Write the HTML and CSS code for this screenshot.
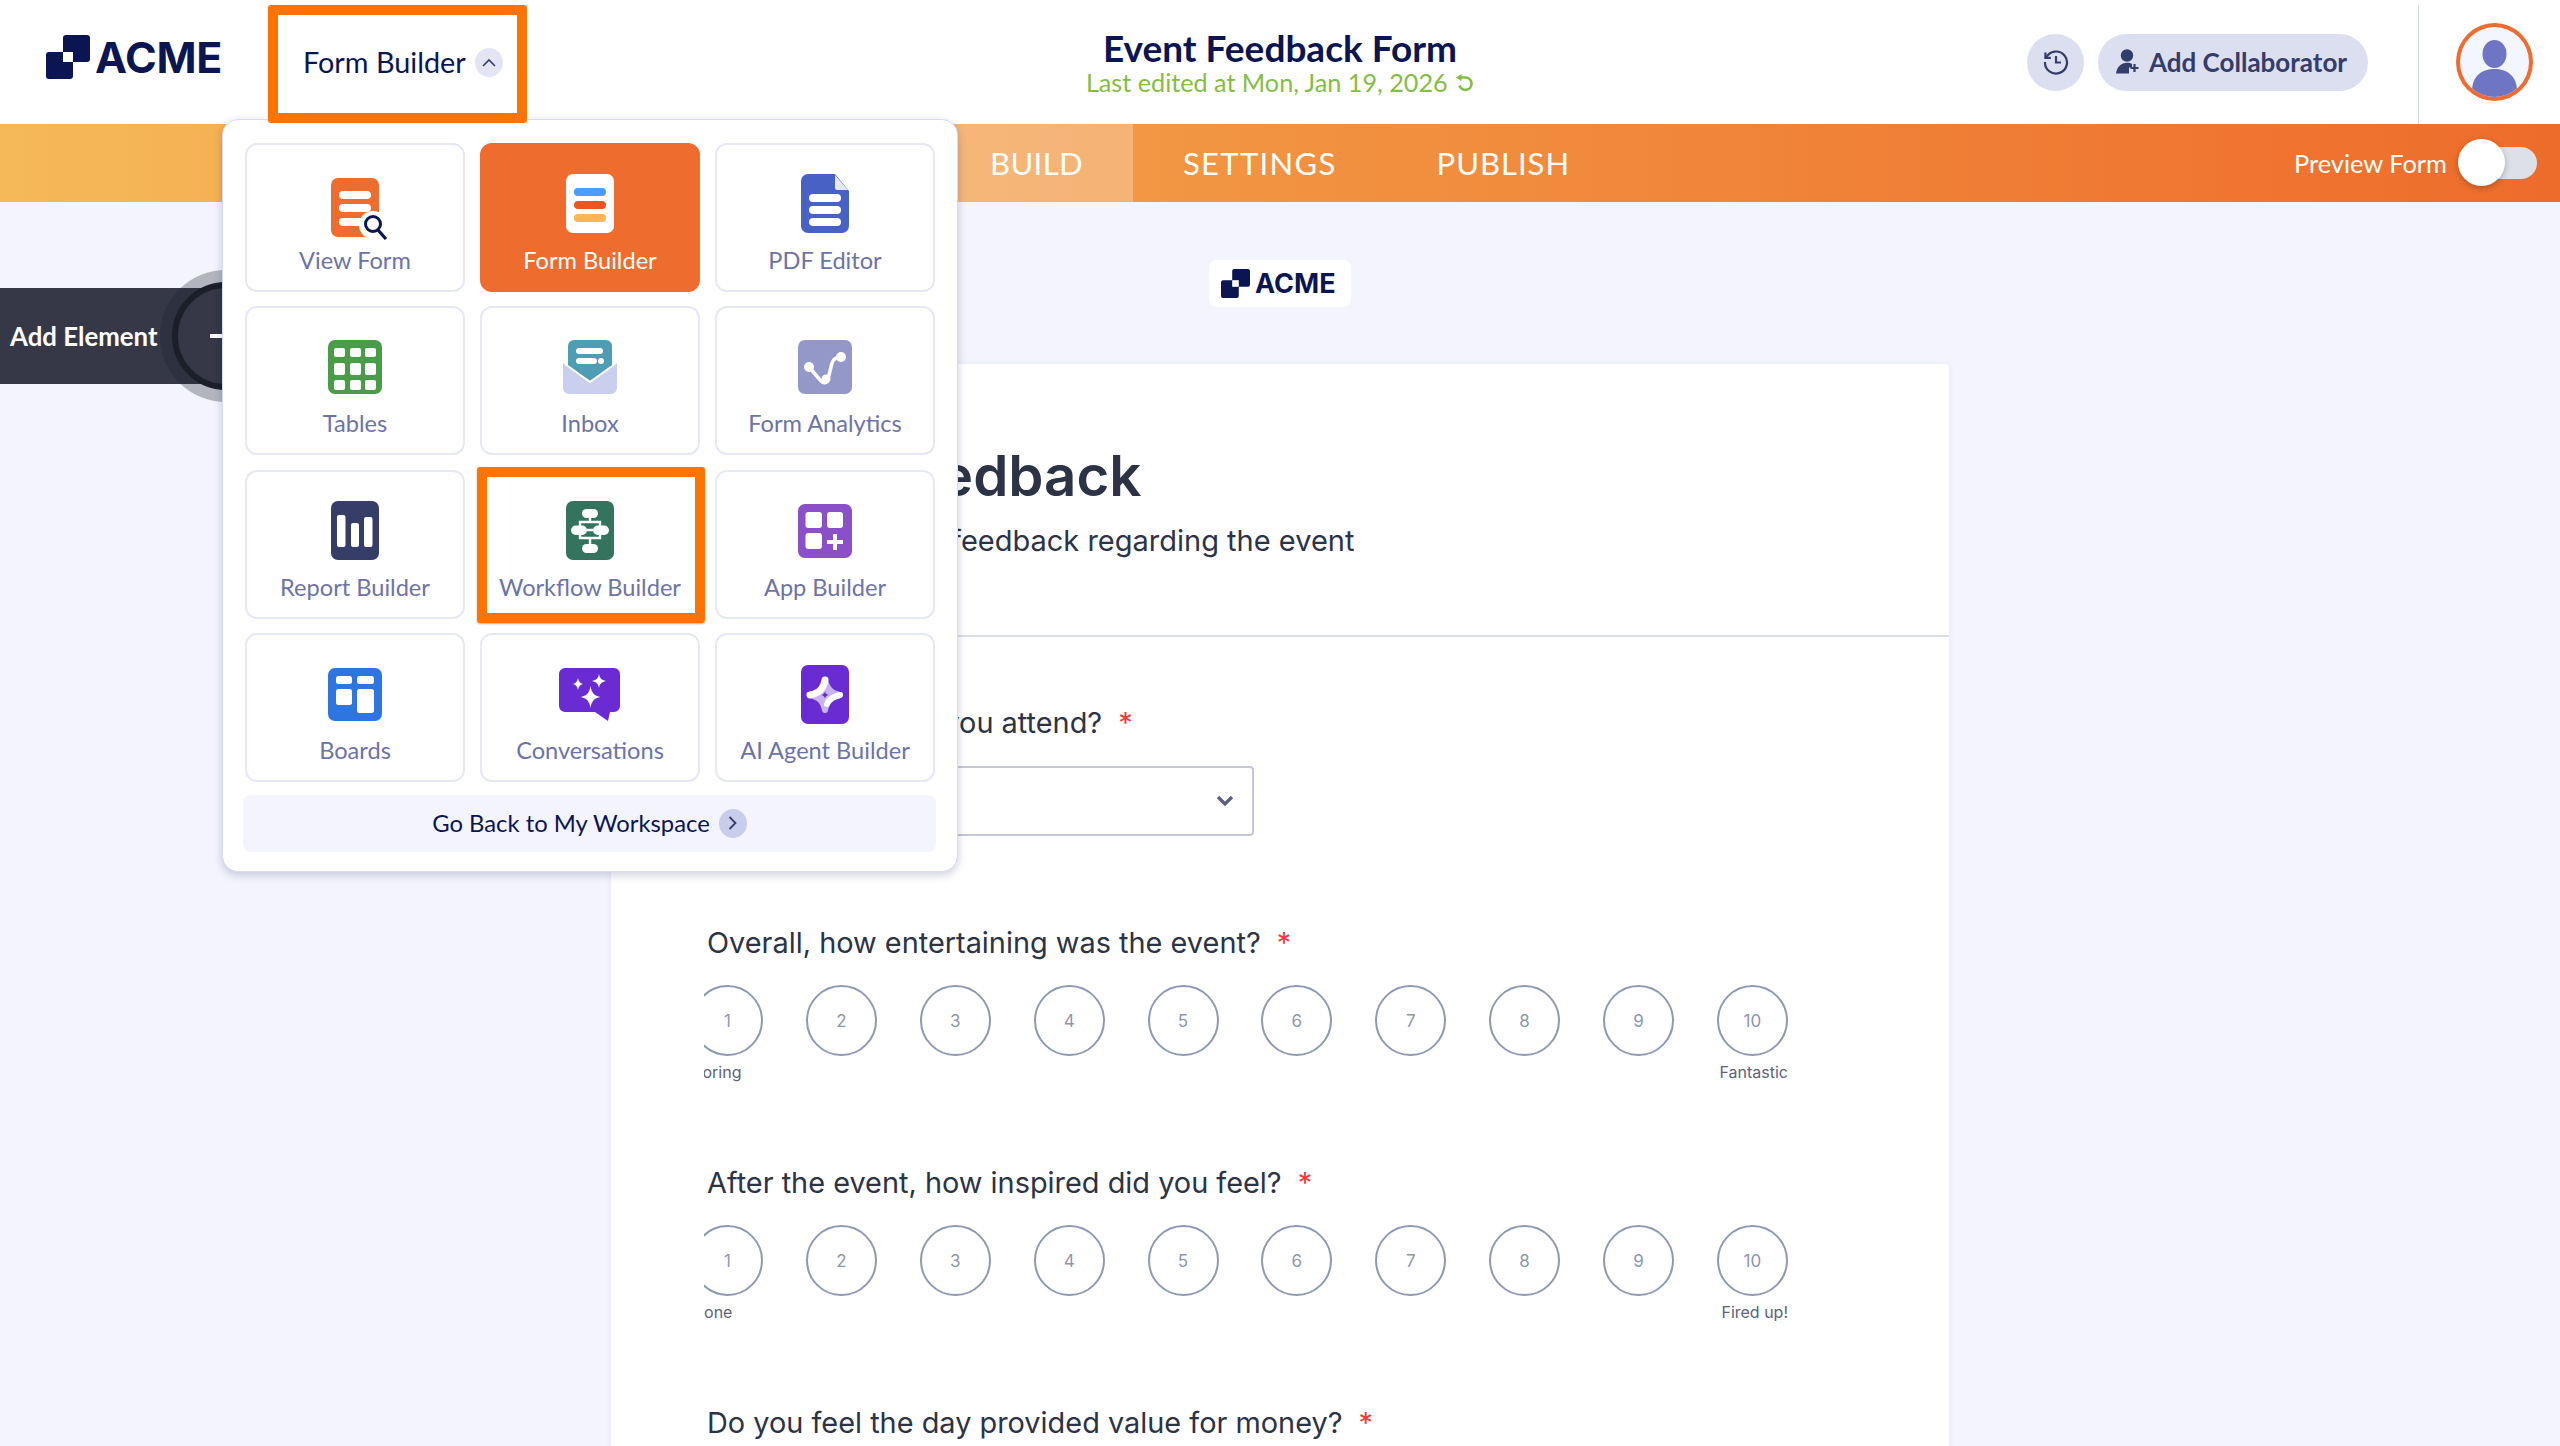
FILE: index.html
```html
<!DOCTYPE html>
<html lang="en">
<head>
    <meta charset="UTF-8">
    <meta name="viewport" content="width=device-width, initial-scale=1.0">
    <title>Event Feedback Form</title>
    <link rel="stylesheet" href="styles.css">
</head>
<body>
    <header class="topbar">
        <div class="topbar-left">
            <div class="logo">
                <svg class="logo-mark" viewBox="0 0 44 44">
                    <rect x="17" y="0" width="27" height="27" rx="3" fill="#0a1551"/>
                    <rect x="0" y="17" width="27" height="27" rx="3" fill="#0a1551"/>
                    <rect x="17" y="17" width="10" height="10" fill="#fff"/>
                </svg>
                <span>ACME</span>
            </div>
            <div class="app-switch">
                <span>Form Builder</span>
                <span class="round-chevron">
                    <svg width="14" height="9" viewBox="0 0 14 9"><path d="M1 8l6-6 6 6" fill="none" stroke="#343c6a" stroke-width="1.6"/></svg>
                </span>
            </div>
        </div>
        <div class="form-title">
            <h1>Event Feedback Form</h1>
            <p>Last edited at Mon, Jan 19, 2026
                <svg width="20" height="18" viewBox="0 0 20 18"><path d="M5 3.500h7a6.200 6.200 0 1 1-6.600 8" fill="none" stroke="#84bd44" stroke-width="2.600"/><path d="M7.500 0L2 3.600l5.500 3.600z" fill="#84bd44"/></svg>
            </p>
        </div>
        <div class="topbar-right">
            <button class="history-btn">
                <svg width="28" height="28" viewBox="0 0 28 28" fill="none" stroke="#343c6a" stroke-width="2.200"><path d="M4.200 9.500A11 11 0 1 1 3 14"/><path d="M3.400 4.500v5.400h5.400"/><path d="M14 8v6.500h5"/></svg>
            </button>
            <button class="collab-btn">
                <svg width="24" height="26" viewBox="0 0 24 26"><circle cx="11" cy="6.500" r="6.200" fill="#343c6a"/><path d="M0 24.500C1 18 5 13.700 11 13.700c2 0 4 .5 5 1.300v3.500h-3v6z" fill="#343c6a"/><path d="M18.500 15v8M14.500 19h8" stroke="#343c6a" stroke-width="2.200"/></svg>
                Add Collaborator
            </button>
            <div class="avatar">
                <svg width="69" height="70" viewBox="0 0 69 70"><ellipse cx="34.500" cy="27" rx="12" ry="14" fill="#6e76c4"/><path d="M12 64c0-15 10-22 22.500-22S57 49 57 64c-6 4.500-14 6-22.500 6S18 68.500 12 64z" fill="#6e76c4"/></svg>
            </div>
        </div>
    </header>

    <nav class="tabbar">
        <div></div>
        <div class="tabs">
            <div class="tab tab-active">BUILD</div>
            <div class="tab tab-wide">SETTINGS</div>
            <div class="tab">PUBLISH</div>
        </div>
        <div class="preview">
            <span>Preview Form</span>
            <div class="toggle"><div class="knob"></div></div>
        </div>
    </nav>

    <div class="add-element">
        <span>Add Element</span>
        <div class="add-ring"><div class="add-plus"></div></div>
    </div>

    <div class="app-menu">
        <div class="app-grid">
            <div class="app-card">
                <svg class="app-icon" viewBox="0 0 72 72">
                    <rect x="12" y="10" width="48" height="59" rx="7" fill="#ee6c2e"/>
                    <rect x="20" y="23" width="32" height="8" rx="4" fill="#fff"/>
                    <rect x="20" y="36" width="32" height="8" rx="4" fill="#fff"/>
                    <rect x="20" y="50" width="32" height="8" rx="4" fill="#fff"/>
                    <circle cx="54" cy="57" r="14" fill="#fff"/>
                    <circle cx="54" cy="56" r="7.500" fill="none" stroke="#0a1551" stroke-width="3"/>
                    <path d="M59 62l8 9" stroke="#0a1551" stroke-width="3.200"/>
                </svg>
                <span>View Form</span>
            </div>
            <div class="app-card app-card-active">
                <svg class="app-icon" viewBox="0 0 72 72">
                    <rect x="12" y="6" width="48" height="59" rx="7" fill="#fff"/>
                    <rect x="20" y="20" width="32" height="8" rx="4" fill="#4c9bff"/>
                    <rect x="20" y="33" width="32" height="8" rx="4" fill="#e65722"/>
                    <rect x="20" y="46" width="32" height="8" rx="4" fill="#f5b94f"/>
                </svg>
                <span>Form Builder</span>
            </div>
            <div class="app-card">
                <svg class="app-icon" viewBox="0 0 72 72">
                    <path d="M19 6h27l14 17v35a7 7 0 0 1-7 7H19a7 7 0 0 1-7-7V13a7 7 0 0 1 7-7z" fill="#4762c4"/>
                    <path d="M46 7l13 15H48a2 2 0 0 1-2-2z" fill="#e4e8f8"/>
                    <rect x="20" y="26" width="32" height="8" rx="4" fill="#fff"/>
                    <rect x="20" y="38" width="32" height="8" rx="4" fill="#fff"/>
                    <rect x="20" y="50" width="32" height="8" rx="4" fill="#fff"/>
                </svg>
                <span>PDF Editor</span>
            </div>
            <div class="app-card">
                <svg class="app-icon" viewBox="0 0 72 72">
                    <rect x="9" y="9" width="54" height="54" rx="7" fill="#499d49"/>
                    <g fill="#fff">
                        <rect x="15" y="17" width="11" height="9" rx="2"/><rect x="31" y="17" width="11" height="9" rx="2"/><rect x="46" y="17" width="11" height="9" rx="2"/>
                        <rect x="15" y="32" width="11" height="12" rx="2"/><rect x="31" y="32" width="11" height="12" rx="2"/><rect x="46" y="32" width="11" height="12" rx="2"/>
                        <rect x="15" y="49" width="11" height="10" rx="2"/><rect x="31" y="49" width="11" height="10" rx="2"/><rect x="46" y="49" width="11" height="10" rx="2"/>
                    </g>
                </svg>
                <span>Tables</span>
            </div>
            <div class="app-card">
                <svg class="app-icon" viewBox="0 0 72 72">
                    <path d="M9 32l27 20 27-20v25a6 6 0 0 1-6 6H15a6 6 0 0 1-6-6z" fill="#c9cfec"/>
                    <path d="M14 15a6 6 0 0 1 6-6h32a6 6 0 0 1 6 6v20L36 50 14 35z" fill="#4f9db5"/>
                    <path d="M11 33l25 18 25-18" fill="none" stroke="#fff" stroke-width="2"/>
                    <rect x="22" y="17" width="27" height="6" rx="3" fill="#fff"/>
                    <rect x="22" y="27" width="21" height="6" rx="3" fill="#fff"/>
                    <circle cx="47" cy="30" r="3" fill="#fff"/>
                </svg>
                <span>Inbox</span>
            </div>
            <div class="app-card">
                <svg class="app-icon" viewBox="0 0 72 72">
                    <rect x="9" y="9" width="54" height="54" rx="7" fill="#9398c9"/>
                    <path d="M20 36l12 14c3 3 6 2 7-2l4-16c1-3 4-6 9-6" fill="none" stroke="#fff" stroke-width="3.500"/>
                    <circle cx="20" cy="36" r="5" fill="#fff"/><circle cx="37" cy="48" r="4.500" fill="#fff"/><circle cx="52" cy="26" r="5" fill="#fff"/>
                </svg>
                <span>Form Analytics</span>
            </div>
            <div class="app-card">
                <svg class="app-icon" viewBox="0 0 72 72">
                    <rect x="12" y="6" width="48" height="59" rx="7" fill="#363d66"/>
                    <rect x="18" y="20" width="8.500" height="32" rx="2" fill="#fff"/>
                    <rect x="32" y="28" width="8" height="24" rx="2" fill="#fff"/>
                    <rect x="45" y="22" width="8.500" height="30" rx="2" fill="#fff"/>
                </svg>
                <span>Report Builder</span>
            </div>
            <div class="app-card app-card-marked">
                <svg class="app-icon" viewBox="0 0 72 72">
                    <rect x="12" y="6" width="48" height="59" rx="7" fill="#33745e"/>
                    <path d="M36 20v7M26 27h20v16H26zM36 43v8M33 35h6" fill="none" stroke="#fff" stroke-width="2.400"/>
                    <rect x="28" y="14" width="16" height="9" rx="4.500" fill="#fff"/>
                    <rect x="28" y="49" width="16" height="9" rx="4.500" fill="#fff"/>
                    <rect x="17" y="30.500" width="16" height="9.500" rx="4.700" fill="#fff"/>
                    <rect x="39" y="30.500" width="16" height="9.500" rx="4.700" fill="#fff"/>
                </svg>
                <span>Workflow Builder</span>
                <div class="marker"></div>
            </div>
            <div class="app-card">
                <svg class="app-icon" viewBox="0 0 72 72">
                    <rect x="9" y="9" width="54" height="54" rx="7" fill="#8b4fc7"/>
                    <rect x="16.500" y="17" width="16.500" height="16" rx="3" fill="#fff"/>
                    <rect x="38" y="17" width="16" height="16" rx="3" fill="#fff"/>
                    <rect x="16.500" y="38" width="16.500" height="16" rx="3" fill="#fff"/>
                    <path d="M46 39v16M38 47h16" stroke="#fff" stroke-width="4"/>
                </svg>
                <span>App Builder</span>
            </div>
            <div class="app-card">
                <svg class="app-icon" viewBox="0 0 72 72">
                    <rect x="9" y="10" width="54" height="53" rx="7" fill="#2f75e0"/>
                    <rect x="17" y="18" width="16" height="8" rx="2.500" fill="#fff"/>
                    <rect x="17" y="31" width="16" height="16" rx="2.500" fill="#fff"/>
                    <rect x="38" y="18" width="17" height="8" rx="2.500" fill="#fff"/>
                    <rect x="38" y="31" width="17" height="24" rx="2.500" fill="#fff"/>
                </svg>
                <span>Boards</span>
            </div>
            <div class="app-card">
                <svg class="app-icon" viewBox="0 0 72 72">
                    <path d="M11 10h49a6 6 0 0 1 6 6v32a6 6 0 0 1-6 6h-4l-2 9-13-9H11a6 6 0 0 1-6-6V16a6 6 0 0 1 6-6z" fill="#6b2bd3"/>
                    <path d="M36.500 28c1 7 4 10 10 11-6 1-9 4-10 11-1-7-4-10-10-11 6-1 9-4 10-11z" fill="#fff"/>
                    <path d="M24 20c.6 3.500 2 5 5 6-3 1-4.400 2.500-5 6-.6-3.500-2-5-5-6 3-1 4.400-2.500 5-6z" fill="#fff"/>
                    <path d="M45 16c.7 4 2.400 6 7 7-4.600 1-6.300 3-7 7-.7-4-2.400-6-7-7 4.600-1 6.300-3 7-7z" fill="#fff"/>
                </svg>
                <span>Conversations</span>
            </div>
            <div class="app-card">
                <svg class="app-icon" viewBox="0 0 72 72">
                    <rect x="12" y="7" width="48" height="59" rx="7" fill="#6b2bd3"/>
                    <path d="M36 22c2 9 6 13 15 15-9 2-13 6-15 15-2-9-6-13-15-15 9-2 13-6 15-15z" fill="#c9b3ef" stroke="#c9b3ef" stroke-width="6" stroke-linejoin="round"/>
                    <path d="M36 22c-1.500 9-6 13.500-15 15" fill="none" stroke="#fff" stroke-width="7" stroke-linecap="round"/>
                    <path d="M51 37c-7 1.500-11 4-13 9" fill="none" stroke="#fff" stroke-width="6" stroke-linecap="round"/>
                    <path d="M36 33.500c.5 2 1.500 3 3.500 3.500-2 .5-3 1.500-3.500 3.500-.5-2-1.500-3-3.500-3.500 2-.5 3-1.500 3.500-3.500z" fill="#6b2bd3"/>
                </svg>
                <span>AI Agent Builder</span>
            </div>
        </div>
        <div class="back-link">
            <span>Go Back to My Workspace</span>
            <span class="round-chevron round-chevron-dark">
                <svg width="9" height="14" viewBox="0 0 9 14"><path d="M1.500 1l6 6-6 6" fill="none" stroke="#343c6a" stroke-width="1.800"/></svg>
            </span>
        </div>
    </div>

    <main class="page">
        <div class="form-logo">
            <svg class="form-logo-mark" viewBox="0 0 44 44">
                <rect x="17" y="0" width="27" height="27" rx="3" fill="#0a1551"/>
                <rect x="0" y="17" width="27" height="27" rx="3" fill="#0a1551"/>
                <rect x="17" y="17" width="10" height="10" fill="#fff"/>
            </svg>
            <span>ACME</span>
        </div>
        <section class="form-card">
            <div class="form-head">
                <h2>Event Feedback</h2>
                <p>Please send your feedback regarding the event</p>
            </div>
            <div class="form-body">
                <div class="question question-select">
                    <label>Which venue did you attend?<span class="req">*</span></label>
                    <div class="select-box">
                        <svg width="18" height="12" viewBox="0 0 18 12"><path d="M2 2l7 7 7-7" fill="none" stroke="#57607c" stroke-width="3.200"/></svg>
                    </div>
                </div>
                <div class="question">
                    <label>Overall, how entertaining was the event?<span class="req">*</span></label>
                    <div class="rating-clip">
                        <div class="rating">
                            <div class="rating-row">
                                <div class="dot">1</div><div class="dot">2</div><div class="dot">3</div><div class="dot">4</div><div class="dot">5</div><div class="dot">6</div><div class="dot">7</div><div class="dot">8</div><div class="dot">9</div><div class="dot">10</div>
                            </div>
                            <div class="rating-labels"><span>Boring</span><span>Fantastic</span></div>
                        </div>
                    </div>
                </div>
                <div class="question">
                    <label>After the event, how inspired did you feel?<span class="req">*</span></label>
                    <div class="rating-clip">
                        <div class="rating">
                            <div class="rating-row">
                                <div class="dot">1</div><div class="dot">2</div><div class="dot">3</div><div class="dot">4</div><div class="dot">5</div><div class="dot">6</div><div class="dot">7</div><div class="dot">8</div><div class="dot">9</div><div class="dot">10</div>
                            </div>
                            <div class="rating-labels"><span>None</span><span>Fired up!</span></div>
                        </div>
                    </div>
                </div>
                <div class="question">
                    <label>Do you feel the day provided value for money?<span class="req">*</span></label>
                </div>
            </div>
        </section>
    </main>
</body>
</html>
```

FILE: styles.css
```css
* {
    box-sizing: border-box;
}
html, body {
    height: 1446px;
    overflow: hidden;
}
body {
    margin: 0;
    position: relative;
    font-family: Lato, "Noto Sans", sans-serif;
    background-color: #f3f4fd;
    color: #0a1551;
}
button {
    font-family: inherit;
    border: none;
}

/* top bar */
.topbar {
    display: grid;
    grid-template-columns: 1fr auto 1fr;
    align-items: center;
    height: 124px;
    background-color: #fff;
}
.topbar-left {
    display: flex;
    align-items: center;
    padding-left: 46px;
}
.logo {
    display: flex;
    align-items: center;
    gap: 5px;
    width: 222px;
    margin-bottom: 10px;
    font-family: Inter, sans-serif;
    font-size: 43px;
    font-weight: 700;
    letter-spacing: -0.3px;
}
.logo-mark {
    width: 44px;
    height: 44px;
}
.app-switch {
    display: flex;
    align-items: center;
    gap: 9px;
    width: 259px;
    height: 118px;
    margin-top: 4px;
    padding: 0 0 4px 25px;
    border: 10.5px solid #ff7300;
    border-radius: 3px;
    font-size: 28.8px;
    white-space: nowrap;
    position: relative;
    z-index: 5;
    background-color: #fff;
}
.round-chevron {
    display: flex;
    flex: none;
    align-items: center;
    justify-content: center;
    width: 28px;
    height: 29px;
    border-radius: 50%;
    background-color: #e3e5f5;
}
.round-chevron-dark {
    background-color: #c8cdec;
}
.form-title {
    text-align: center;
}
.form-title h1 {
    margin: 0;
    font-size: 37px;
    line-height: 40px;
    font-weight: 700;
}
.form-title p {
    margin: 0;
    font-size: 25.2px;
    line-height: 28px;
    color: #84bd44;
}
.topbar-right {
    display: flex;
    align-items: center;
    justify-content: flex-end;
    height: 100%;
    padding-right: 27px;
}
.history-btn {
    display: flex;
    align-items: center;
    justify-content: center;
    width: 57px;
    height: 57px;
    border-radius: 50%;
    background-color: #dcdff0;
}
.collab-btn {
    display: flex;
    align-items: center;
    gap: 9px;
    width: 270px;
    height: 57px;
    margin-left: 14px;
    padding-left: 18px;
    border-radius: 29px;
    background-color: #dcdff0;
    color: #343c6a;
    font-size: 26px;
    font-weight: 700;
}
.avatar {
    display: flex;
    align-items: flex-end;
    justify-content: center;
    width: 115px;
    height: 119px;
    margin: 5px 0 0 50px;
    border-left: 1.5px solid #d0d6ee;
}
.avatar svg {
    width: 77px;
    height: 78px;
    margin: 0 0 23px 37px;
    padding: 4px;
    border-radius: 50%;
    background-color: #f3f6fe;
    box-shadow: inset 0 0 0 4px #ee6c2e;
}

/* orange tab bar */
.tabbar {
    display: grid;
    grid-template-columns: 1fr auto 1fr;
    align-items: center;
    height: 78px;
    background: linear-gradient(90deg, #f5b957 0%, #ee6c2b 100%);
    color: #fff;
}
.tabs {
    display: flex;
    height: 100%;
}
.tab {
    display: flex;
    align-items: center;
    padding: 0 50px;
    font-size: 31px;
    letter-spacing: 1px;
}
.tab-active {
    background-color: rgba(255, 255, 255, 0.27);
    letter-spacing: 0.4px;
}
.tab-wide {
    letter-spacing: 1.3px;
}
.preview {
    display: flex;
    align-items: center;
    justify-content: flex-end;
    gap: 14px;
    padding-right: 23px;
    font-size: 25.4px;
}
.toggle {
    width: 76px;
    height: 32px;
    border-radius: 16px;
    background-color: #dde0e6;
    position: relative;
}
.knob {
    position: absolute;
    left: -3px;
    top: -8px;
    width: 47px;
    height: 47px;
    border-radius: 50%;
    background-color: #fff;
    box-shadow: 0 2px 6px rgba(0, 0, 0, 0.25);
}

/* floating add element button */
.add-element {
    position: absolute;
    left: 0;
    top: 288px;
    display: flex;
    align-items: center;
    width: 240px;
    height: 96px;
    padding-left: 10px;
    background-color: #363848;
    color: #fff;
    font-size: 25.8px;
    font-weight: 700;
}
.add-ring {
    position: absolute;
    left: 172px;
    top: -6px;
    width: 108px;
    height: 108px;
    border-radius: 50%;
    background-color: #363848;
    border: 6px solid #1c1e29;
    box-shadow: 0 0 0 12px rgba(30, 32, 45, 0.3);
}
.add-plus {
    position: absolute;
    left: 32px;
    top: 46px;
    width: 32px;
    height: 4px;
    background-color: #fff;
}

/* app switcher menu */
.app-menu {
    position: absolute;
    left: 222px;
    top: 119px;
    z-index: 3;
    width: 736px;
    height: 753px;
    padding: 23px 22px 20px 22px;
    border: 1px solid #d8dcef;
    border-radius: 16px;
    background-color: #fff;
    box-shadow: 0 3px 10px rgba(10, 21, 81, 0.2);
}
.app-grid {
    display: grid;
    grid-template-columns: repeat(3, 220px);
    grid-auto-rows: 149px;
    gap: 14.3px 15px;
}
.app-card {
    display: flex;
    flex-direction: column;
    align-items: center;
    padding-top: 23px;
    border: 2px solid #e6e8f6;
    border-radius: 12px;
    color: #6c73a8;
    font-size: 23.6px;
    line-height: 28px;
    position: relative;
}
.app-card-active {
    background-color: #ee6c2e;
    border-color: #ee6c2e;
    color: #fff;
}
.app-icon {
    width: 72px;
    height: 72px;
    margin-bottom: 6px;
}
.marker {
    position: absolute;
    left: -5px;
    top: -5px;
    right: -7px;
    bottom: -6px;
    border: 10.5px solid #ff7300;
    border-radius: 3px;
    box-shadow: 0 1px 2px rgba(0, 0, 0, 0.3);
}
.back-link {
    display: flex;
    align-items: center;
    justify-content: center;
    gap: 9px;
    height: 57px;
    margin: 13px -1px 0 -2px;
    border-radius: 8px;
    background-color: #f3f4fd;
    font-size: 23.8px;
}

/* form */
.page {
    display: flex;
    flex-direction: column;
    align-items: center;
    padding-top: 58px;
}
.form-logo {
    display: flex;
    align-items: center;
    gap: 5px;
    width: 142px;
    height: 47px;
    padding-left: 12px;
    border-radius: 8px;
    background-color: #fff;
    font-family: Inter, sans-serif;
    font-size: 27px;
    font-weight: 700;
}
.form-logo-mark {
    width: 29px;
    height: 29px;
}
.form-card {
    width: 1338px;
    margin-top: 57px;
    background-color: #fff;
    border-radius: 4px 4px 0 0;
    box-shadow: 0 0 6px rgba(10, 21, 81, 0.06);
    font-family: Inter, sans-serif;
    color: #2c3345;
}
.form-head {
    padding: 77px 96px 76px;
    border-bottom: 2px solid #dcdee6;
}
.form-head h2 {
    margin: 0;
    font-size: 56.4px;
    line-height: 70px;
    font-weight: 600;
}
.form-head p {
    margin: 12px 0 0;
    font-size: 29px;
    line-height: 36px;
}
.form-body {
    padding: 68px 96px 0;
}
.question {
    margin-bottom: 83px;
}
.question-select {
    margin-bottom: 89px;
}
.question label {
    display: block;
    font-size: 28.9px;
    line-height: 36px;
}
.req {
    margin-left: 16px;
    color: #f23a3c;
}
.select-box {
    display: flex;
    align-items: center;
    justify-content: flex-end;
    width: 547px;
    height: 70px;
    margin-top: 25px;
    padding-right: 18px;
    border: 2px solid #c3c7d6;
    border-radius: 4px;
}
.rating-clip {
    width: 1100px;
    margin: 24px 0 0 -3px;
    overflow: hidden;
}
.rating {
    width: 1096px;
    margin-left: -12px;
}
.rating-row {
    display: flex;
    justify-content: space-between;
}
.dot {
    display: flex;
    align-items: center;
    justify-content: center;
    width: 71px;
    height: 71px;
    border: 2px solid #9099b3;
    border-radius: 50%;
    color: #8f96ad;
    font-size: 17px;
}
.rating-labels {
    display: flex;
    justify-content: space-between;
    margin-top: 6px;
    font-size: 16px;
    line-height: 20px;
    color: #5c6378;
}
```
